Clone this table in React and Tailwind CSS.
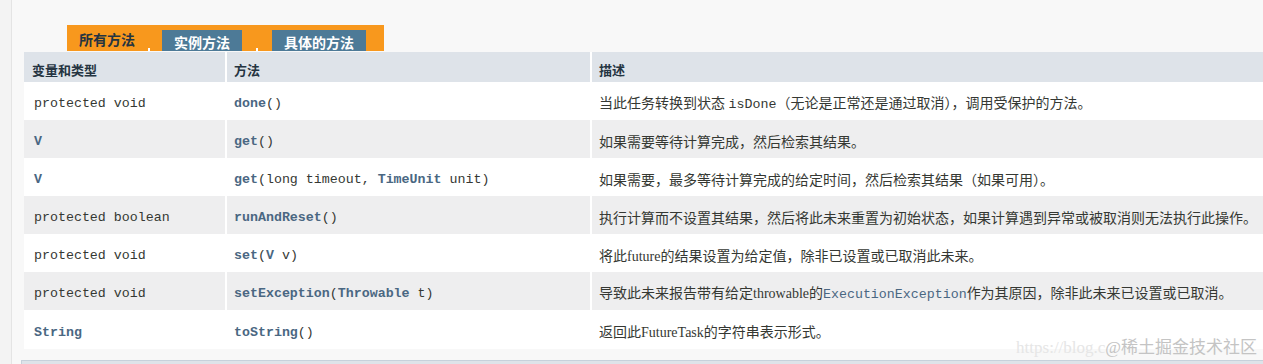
import React from 'react';

const mono = { fontFamily: '"Liberation Mono", "Courier New", monospace' };

const L = ({ children }) => <span className="font-bold text-[#4a6782]">{children}</span>;

const rows = [
  {
    type: <span>protected void</span>,
    method: (
      <>
        <L>done</L>()
      </>
    ),
    desc: (
      <>
        当此任务转换到状态 <span className="text-[13.3px] font-['Liberation_Mono',monospace]">isDone</span>（无论是正常还是通过取消），调用受保护的方法。
      </>
    ),
  },
  {
    type: <L>V</L>,
    method: (
      <>
        <L>get</L>()
      </>
    ),
    desc: <>如果需要等待计算完成，然后检索其结果。</>,
  },
  {
    type: <L>V</L>,
    method: (
      <>
        <L>get</L>(long timeout, <L>TimeUnit</L> unit)
      </>
    ),
    desc: <>如果需要，最多等待计算完成的给定时间，然后检索其结果（如果可用）。</>,
  },
  {
    type: <span>protected boolean</span>,
    method: (
      <>
        <L>runAndReset</L>()
      </>
    ),
    desc: <>执行计算而不设置其结果，然后将此未来重置为初始状态，如果计算遇到异常或被取消则无法执行此操作。</>,
  },
  {
    type: <span>protected void</span>,
    method: (
      <>
        <L>set</L>(<L>V</L> v)
      </>
    ),
    desc: <>将此future的结果设置为给定值，除非已设置或已取消此未来。</>,
  },
  {
    type: <span>protected void</span>,
    method: (
      <>
        <L>setException</L>(<L>Throwable</L> t)
      </>
    ),
    desc: (
      <>
        导致此未来报告带有给定throwable的
        <span className="text-[13.3px] text-[#4a6782] font-['Liberation_Mono',monospace]">ExecutionException</span>
        作为其原因，除非此未来已设置或已取消。
      </>
    ),
  },
  {
    type: <L>String</L>,
    method: (
      <>
        <L>toString</L>()
      </>
    ),
    desc: <>返回此FutureTask的字符串表示形式。</>,
  },
];

export default function App() {
  return (
    <div className="relative flex h-[364px] w-full overflow-hidden bg-[#f8f8f8] text-[#353833]">
      {/* left gutter */}
      <div className="w-[12px] shrink-0 border-r border-[#e4e4e4] bg-[#f3f3f3]"></div>

      <div className="flex min-w-0 flex-1 flex-col pt-[25px]">
        {/* Tabs */}
        <div
          className="ml-[55px] flex h-[26px] w-[317px] items-stretch bg-[#f8981d]"
          style={{ fontFamily: '"Liberation Sans", "Noto Sans CJK SC", sans-serif' }}
        >
          <span className="ml-[12px] w-[57px] pt-[6px] text-[14px] font-bold leading-[18px] text-[#253441]">所有方法</span>
          <div className="flex w-[26px] items-end justify-center">
            <div className="h-[3px] w-[2px] bg-white"></div>
          </div>
          <div className="mt-[5px] flex w-[80px] items-start justify-center bg-[#4d7a97] pt-[5px] text-[14px] font-bold leading-[16px] text-white">
            实例方法
          </div>
          <div className="flex w-[30px] items-end justify-center">
            <div className="h-[3px] w-[2px] bg-white"></div>
          </div>
          <div className="mt-[5px] flex w-[94px] items-start justify-center bg-[#4d7a97] pt-[5px] text-[14px] font-bold leading-[16px] text-white">
            具体的方法
          </div>
        </div>

        {/* Table */}
        <div className="ml-[12px] mt-[1px] flex flex-col bg-white">
          <div
            className="grid h-[30px] grid-cols-[201px_363px_1fr] gap-x-[2px] text-[13px] font-bold text-[#253441]"
            style={{ fontFamily: '"Liberation Sans", "Noto Sans CJK SC", sans-serif' }}
          >
            <div className="flex items-center bg-[#dee3e9] pl-[8px] pt-[7px]">变量和类型</div>
            <div className="flex items-center bg-[#dee3e9] pl-[7px] pt-[7px]">方法</div>
            <div className="flex items-center bg-[#dee3e9] pl-[7px] pt-[7px]">描述</div>
          </div>
          {rows.map((r, i) => {
            const bg = i % 2 === 0 ? 'bg-white' : 'bg-[#eeeeef]';
            return (
              <div key={i} className={`grid grid-cols-[201px_363px_1fr] gap-x-[2px] ${i === rows.length - 1 ? 'h-[39px]' : 'h-[38px]'}`}>
                <div className={`flex items-center whitespace-pre pl-[10px] pt-[6px] text-[13.3px] ${bg}`} style={mono}>
                  {r.type}
                </div>
                <div className={`flex items-center whitespace-pre pl-[7px] pt-[6px] text-[13.3px] ${bg}`} style={mono}>
                  <span>{r.method}</span>
                </div>
                <div
                  className={`flex items-center whitespace-nowrap pl-[7px] pt-[6px] text-[14px] ${bg}`}
                  style={{ fontFamily: '"Liberation Serif", "Noto Sans CJK SC", serif' }}
                >
                  <span className="whitespace-pre">{r.desc}</span>
                </div>
              </div>
            );
          })}
        </div>

        {/* bottom bar */}
        <div className="ml-[9px] mt-[11px] h-[10px] border-l border-t border-[#c7d1db] bg-[#dee3e9]"></div>
      </div>

      {/* watermark */}
      <div
        className="pointer-events-none absolute bottom-[6px] right-[6px] text-[17px] leading-[20px]"
        style={{ fontFamily: '"Liberation Serif", "Noto Sans CJK SC", serif' }}
      >
        <span className="text-[#e6e6e6]">https://blog.c</span>
        <span className="text-[#c4c4c4]">@稀土掘金技术社区</span>
      </div>
    </div>
  );
}
